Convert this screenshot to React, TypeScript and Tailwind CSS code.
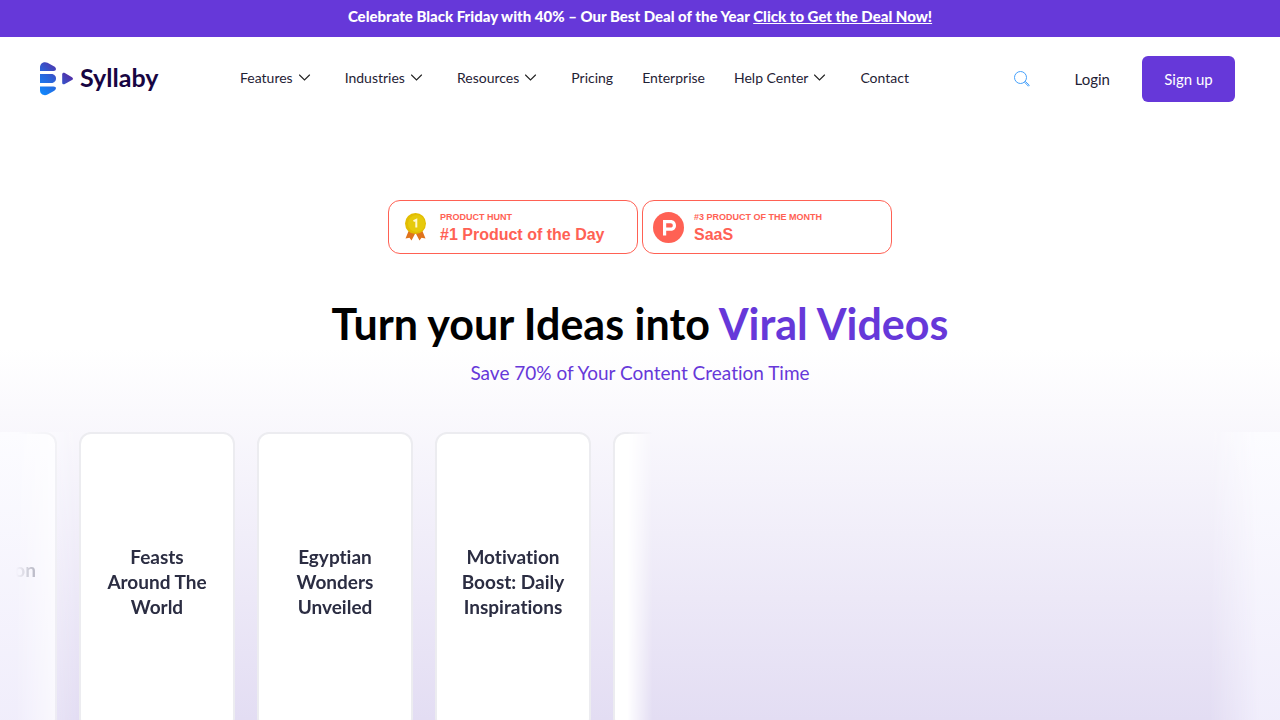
import { Fragment } from "react";

const navItems = [
  { label: "Features", menu: true },
  { label: "Industries", menu: true },
  { label: "Resources", menu: true },
  { label: "Pricing", menu: false },
  { label: "Enterprise", menu: false },
  { label: "Help Center", menu: true },
  { label: "Contact", menu: false },
];

const cards = [
  ["Feasts", "Around The", "World"],
  ["Egyptian", "Wonders", "Unveiled"],
  ["Motivation", "Boost: Daily", "Inspirations"],
  [],
];

function Chevron() {
  return (
    <svg className="h-4 w-[17px]" viewBox="0 0 17 16" fill="none" aria-hidden="true">
      <path d="M0.5 5L5.500 10L10.500 5" stroke="#222" strokeWidth="1.1" strokeLinecap="round" />
    </svg>
  );
}

function Logo() {
  return (
    <a href="#" className="flex w-[200px] shrink-0 items-center gap-[6px]">
      <svg className="h-[34px] w-[34px]" viewBox="0 0 34 34" aria-hidden="true">
        <defs>
          <linearGradient id="mark" gradientUnits="userSpaceOnUse" x1="4" y1="32" x2="25" y2="9">
            <stop offset="0" stopColor="#1285fa" />
            <stop offset="0.5" stopColor="#2b62d8" />
            <stop offset="1" stopColor="#5230a8" />
          </linearGradient>
        </defs>
        <g fill="url(#mark)">
          <path d="M0 9V5.2C0 1 4.200-.8 7.500.7L14.300 4.500C16.700 5.900 16.500 9 13.500 9Z" />
          <path d="M0 12H11.500C14.200 12 16 14.200 16 16.500S14.200 21 11.500 21H0Z" />
          <path d="M0 24.600H13.500C16.500 24.600 16.700 27.300 14.300 28.700L7.500 32.600C4.200 34.200 0 32.500 0 28Z" />
          <path d="M22.200 12.500C22.200 11 23.500 10.500 24.800 11.100L32 15.200C33.300 16 33.300 17.200 32 18L24.800 22C23.500 22.700 22.200 22.100 22.200 20.700Z" />
        </g>
      </svg>
      <span className="pb-1 text-[25px] leading-8 font-bold text-[#170542]">Syllaby</span>
    </a>
  );
}

function Medal() {
  return (
    <svg className="h-[30px] w-[30px]" viewBox="0 0 30 30" aria-hidden="true">
      <path d="M5 18L1.500 26.500L5.500 25.800L7.500 28.500L12 20Z" fill="#e0731c" />
      <path d="M18 18L21.500 26.500L17.500 25.800L15.500 28.500L11 20Z" fill="#e0731c" />
      <circle cx="11.500" cy="11.500" r="10.500" fill="#e2bd02" />
      <circle cx="12.500" cy="11.500" r="8.500" fill="#e6ca0c" />
      <path d="M9.500 9.200L12.300 7.800V15.500" stroke="#fff8d0" strokeWidth="2" fill="none" />
    </svg>
  );
}

function ProductHunt() {
  return (
    <svg className="h-[31px] w-[31px]" viewBox="0 0 31 31" aria-hidden="true">
      <circle cx="15.500" cy="15.500" r="15.500" fill="#ff6154" />
      <path
        fill="#fff"
        fillRule="evenodd"
        d="M10 8H17.700C20.700 8 23 10.200 23 13.400S20.700 18.800 17.700 18.800H13.200V23.500H10ZM13.200 11.200V15.600H17.600C18.900 15.600 19.800 14.700 19.800 13.400S18.900 11.200 17.600 11.200Z"
      />
    </svg>
  );
}

export default function App() {
  return (
    <div className="flex h-screen flex-col overflow-hidden bg-white font-['Lato',sans-serif] text-[#1f2235] [font-variant-ligatures:none]">
      <div className="h-[37px] shrink-0 bg-[#6638d9] pt-[6px] text-center text-[15px] leading-5 font-black text-white">
        Celebrate Black Friday with 40% – Our Best Deal of the Year{" "}
        <a href="#" className="underline">
          Click to Get the Deal Now!
        </a>
      </div>

      <header className="flex h-[83px] shrink-0 items-center pr-[45px] pl-10">
        <Logo />
        <nav className="flex items-center gap-[29px] pb-[2px] text-[14px] leading-5">
          {navItems.map((item) => (
            <a key={item.label} href="#" className="flex items-center gap-[6px] whitespace-nowrap">
              {item.label}
              {item.menu && <Chevron />}
            </a>
          ))}
        </nav>
        <div className="ml-auto flex items-center">
          <button type="button" aria-label="Search" className="mr-[45px]">
            <svg className="h-4 w-4" viewBox="0 0 16 16" fill="none" stroke="#46a1fb" aria-hidden="true">
              <circle cx="6.500" cy="6.500" r="6" />
              <path d="M10.500 11.200L11.300 10.400L15.300 14.200L14.400 15.200Z" />
            </svg>
          </button>
          <a href="#" className="mr-8 text-[15px] leading-5">
            Login
          </a>
          <button type="button" className="h-[46px] w-[93px] rounded-md bg-[#6638d9] text-[15px] leading-5 text-white">
            Sign up
          </button>
        </div>
      </header>

      <main className="flex min-h-0 flex-1 flex-col overflow-hidden bg-linear-to-b from-white from-38% to-[#e3ddf3] pt-20">
        {/* Product Hunt badges */}
        <div className="flex shrink-0 justify-center gap-1 font-['Liberation_Sans',sans-serif] font-bold text-[#ff6154]">
          <a href="#" className="flex h-[54px] w-[250px] items-center gap-[6px] rounded-xl border border-[#ff6154] bg-white pl-[15px]">
            <Medal />
            <div className="pt-1">
              <div className="text-[9px] leading-3">PRODUCT HUNT</div>
              <div className="text-[16px] leading-6">#1 Product of the Day</div>
            </div>
          </a>
          <a href="#" className="flex h-[54px] w-[250px] items-center gap-[10px] rounded-xl border border-[#ff6154] bg-white pl-[10px]">
            <ProductHunt />
            <div className="pt-1">
              <div className="text-[9px] leading-3">#3 PRODUCT OF THE MONTH</div>
              <div className="text-[16px] leading-6">SaaS</div>
            </div>
          </a>
        </div>

        <h1 className="mt-[43px] text-center text-[43px] leading-[54px] font-bold text-black">
          Turn your Ideas into <span className="text-[#6638d9]">Viral Videos</span>
        </h1>
        <p className="mt-[10px] text-center text-[19px] leading-6 text-[#6638d9]">Save 70% of Your Content Creation Time</p>

        {/* Carousel, faded out at both ends */}
        <section className="relative mt-[47px] flex shrink-0">
          <div className="w-[51%] overflow-hidden mask-r-from-96% mask-r-to-100%">
            <div className="flex gap-[22px] text-[19px] leading-[25px] font-bold text-[#2b2d42]">
              {/* card that is sliding out on the left */}
              <div className="flex h-[298px] w-[57px] shrink-0 items-center justify-end rounded-r-xl border-2 border-l-0 border-[#ececf0] bg-white pr-[19px] pb-6">
                on
              </div>
              {cards.map((lines, i) => (
                <div
                  key={i}
                  className="flex h-[298px] w-[156px] shrink-0 items-center justify-center rounded-xl border-2 border-[#ececf0] bg-white text-center"
                >
                  <p>
                    {lines.map((line) => (
                      <Fragment key={line}>
                        {line}
                        <br />
                      </Fragment>
                    ))}
                  </p>
                </div>
              ))}
            </div>
          </div>
          <div className="absolute inset-y-0 left-0 w-20 bg-linear-to-b from-[#fcfcff] to-[#f0edfb] mask-r-from-20% mask-r-to-100%" />
          <div className="absolute inset-y-0 right-0 w-20 bg-linear-to-b from-[#fcfcff] to-[#f0edfb] mask-l-from-25% mask-l-to-90%" />
        </section>
      </main>
    </div>
  );
}
